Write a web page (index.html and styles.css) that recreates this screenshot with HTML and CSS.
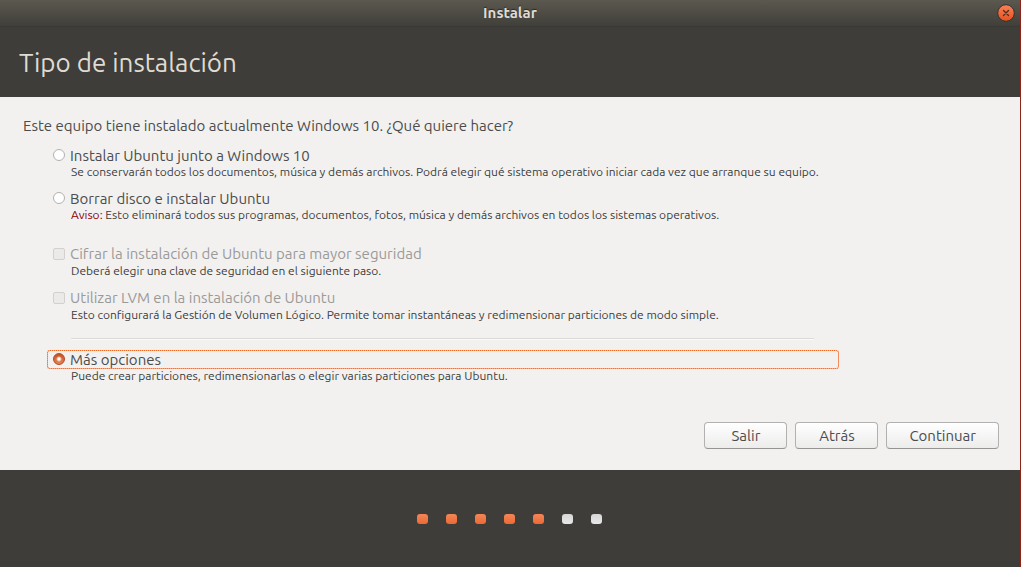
FILE: index.html
```html
<!DOCTYPE html>
<html lang="es">
<head>
<meta charset="utf-8">
<meta name="viewport" content="width=device-width, initial-scale=1">
<title>Instalar</title>
<link rel="stylesheet" href="styles.css">
</head>
<body>
<div class="window">
  <div class="titlebar">
    <span class="titlebar-text">Instalar</span>
    <button class="close" type="button" aria-label="Cerrar">
      <svg class="close-icon" viewBox="0 0 18 18" aria-hidden="true">
        <defs>
          <linearGradient id="close-fill" x1="0" y1="0" x2="0" y2="1">
            <stop offset="0" stop-color="#f88158"/>
            <stop offset="1" stop-color="#e9501e"/>
          </linearGradient>
        </defs>
        <circle cx="9" cy="9" r="8.3" fill="url(#close-fill)" stroke="#34332e" stroke-width="1"/>
        <path d="M6.5 6.5l5 5M11.5 6.5l-5 5" stroke="#48301f" stroke-width="1.3" stroke-linecap="round"/>
      </svg>
    </button>
  </div>
  <header class="header">
    <h1 class="heading">Tipo de instalación</h1>
  </header>
  <main class="content">
    <form class="form">
      <p class="question" id="question">Este equipo tiene instalado actualmente Windows 10. ¿Qué quiere hacer?</p>
      <div class="options" role="group" aria-labelledby="question">
        <div class="option">
          <label class="choice"><input class="control radio" type="radio" name="type">Instalar Ubuntu junto a Windows 10</label>
          <p class="description">Se conservarán todos los documentos, música y demás archivos. Podrá elegir qué sistema operativo iniciar cada vez que arranque su equipo.</p>
        </div>
        <div class="option">
          <label class="choice"><input class="control radio" type="radio" name="type">Borrar disco e instalar Ubuntu</label>
          <p class="description"><span class="warning">Aviso:</span> Esto eliminará todos sus programas, documentos, fotos, música y demás archivos en todos los sistemas operativos.</p>
        </div>
        <div class="option option-extra">
          <label class="choice choice-disabled"><input class="control checkbox" type="checkbox" disabled>Cifrar la instalación de Ubuntu para mayor seguridad</label>
          <p class="description">Deberá elegir una clave de seguridad en el siguiente paso.</p>
        </div>
        <div class="option">
          <label class="choice choice-disabled"><input class="control checkbox" type="checkbox" disabled>Utilizar LVM en la instalación de Ubuntu</label>
          <p class="description">Esto configurará la Gestión de Volumen Lógico. Permite tomar instantáneas y redimensionar particiones de modo simple.</p>
        </div>
        <hr class="separator">
        <div class="option">
          <label class="choice choice-focused"><input class="control radio" type="radio" name="type" checked>Más opciones</label>
          <p class="description">Puede crear particiones, redimensionarlas o elegir varias particiones para Ubuntu.</p>
        </div>
      </div>
      <div class="actions">
        <button class="button" type="button">Salir</button>
        <button class="button" type="button">Atrás</button>
        <button class="button" type="button">Continuar</button>
      </div>
    </form>
  </main>
  <footer class="footer">
    <ol class="steps" aria-label="Paso 5 de 7">
      <li class="step step-done"></li>
      <li class="step step-done"></li>
      <li class="step step-done"></li>
      <li class="step step-done"></li>
      <li class="step step-done"></li>
      <li class="step"></li>
      <li class="step"></li>
    </ol>
  </footer>
</div>
</body>
</html>
```
FILE: styles.css
```css
* {
  box-sizing: border-box;
}

body {
  margin: 0;
  background: #3e3d39;
  color: #4c4c4c;
  font-family: "Ubuntu", "Noto Sans", "Open Sans", sans-serif;
  font-size: 15px;
  line-height: 19px;
}

.window {
  display: flex;
  flex-direction: column;
  min-height: 100vh;
  border-right: 1px solid #8e2419;
}

.titlebar {
  display: grid;
  grid-template-columns: 1fr auto 1fr;
  align-items: center;
  padding: 4px 5px;
  background: linear-gradient(#5b584f, #403f3a);
  border-bottom: 1px solid #3a3935;
}

.titlebar-text {
  grid-column: 2;
  color: #dfdbd2;
  font-size: 15px;
  line-height: 18px;
  font-weight: 700;
  text-shadow: 0 -1px 1px #2a2926;
}

.close {
  justify-self: end;
  width: 18px;
  height: 18px;
  padding: 0;
  border: 0;
  background: none;
}

.close-icon {
  display: block;
  width: 18px;
  height: 18px;
}

.header {
  padding: 20px 19px 18px;
  color: #dfdbd2;
}

.heading {
  margin: 0;
  font-size: 26px;
  line-height: 32px;
  font-weight: 400;
}

.content {
  background: #f2f1f0;
}

.form {
  padding: 19px 21px 21px 23px;
}

.question {
  margin: 0 0 11px;
}

.options {
  display: flex;
  flex-direction: column;
  gap: 10px;
  width: fit-content;
  margin-left: 24px;
}

.option-extra {
  margin-top: 12px;
}

.choice {
  display: flex;
  align-items: center;
  gap: 5px;
  padding-left: 6px;
}

.choice-disabled {
  color: #9b9a98;
  line-height: 20px;
}

.choice-focused {
  outline: 1px dotted #f0651f;
  outline-offset: -1px;
  border-radius: 3px;
  box-shadow: inset 0 0 0 1px #f9b79b;
}

.control {
  appearance: none;
  flex: none;
  width: 12px;
  height: 12px;
  margin: 0;
  border: 1px solid #b2b1b0;
  background: #ffffff;
}

.radio {
  margin-bottom: 2px;
  border-radius: 50%;
}

.radio:checked {
  border-color: #b04a20;
  background: radial-gradient(circle, #ffffff 1px, transparent 3px), linear-gradient(#c9511f, #e68458);
}

.checkbox {
  border-radius: 2px;
}

.checkbox:disabled {
  border-color: #d3d1cf;
  background: #ebeae9;
}

.description {
  margin: 0 0 0 24px;
  padding-right: 20px;
  font-size: 12px;
  line-height: 14px;
  color: #3c3c3c;
}

.warning {
  color: #8b0000;
}

.separator {
  align-self: stretch;
  height: 2px;
  margin: 6px 25px 0 24px;
  border: 0;
  border-top: 1px solid #dcdbda;
  background: #fbfbfa;
}

.actions {
  display: flex;
  justify-content: flex-end;
  gap: 8px;
  margin-top: 39px;
}

.button {
  min-width: 83px;
  padding: 3px 22px;
  border: 1px solid #b3b1af;
  border-bottom-color: #969492;
  border-radius: 4px;
  background: linear-gradient(#ffffff, #ececeb);
  color: #4c4c4c;
  font: inherit;
  line-height: 19px;
}

.footer {
  display: flex;
  flex: 1;
  align-items: center;
  justify-content: center;
}

.steps {
  display: flex;
  gap: 18px;
  margin: 0 2px 0 0;
  padding: 0;
  list-style: none;
}

.step {
  width: 11px;
  height: 10px;
  border-radius: 3px;
  background: linear-gradient(#d6d6d6, #e8e8e8);
}

.step-done {
  background: linear-gradient(#f58656, #ea6a35);
}
```
